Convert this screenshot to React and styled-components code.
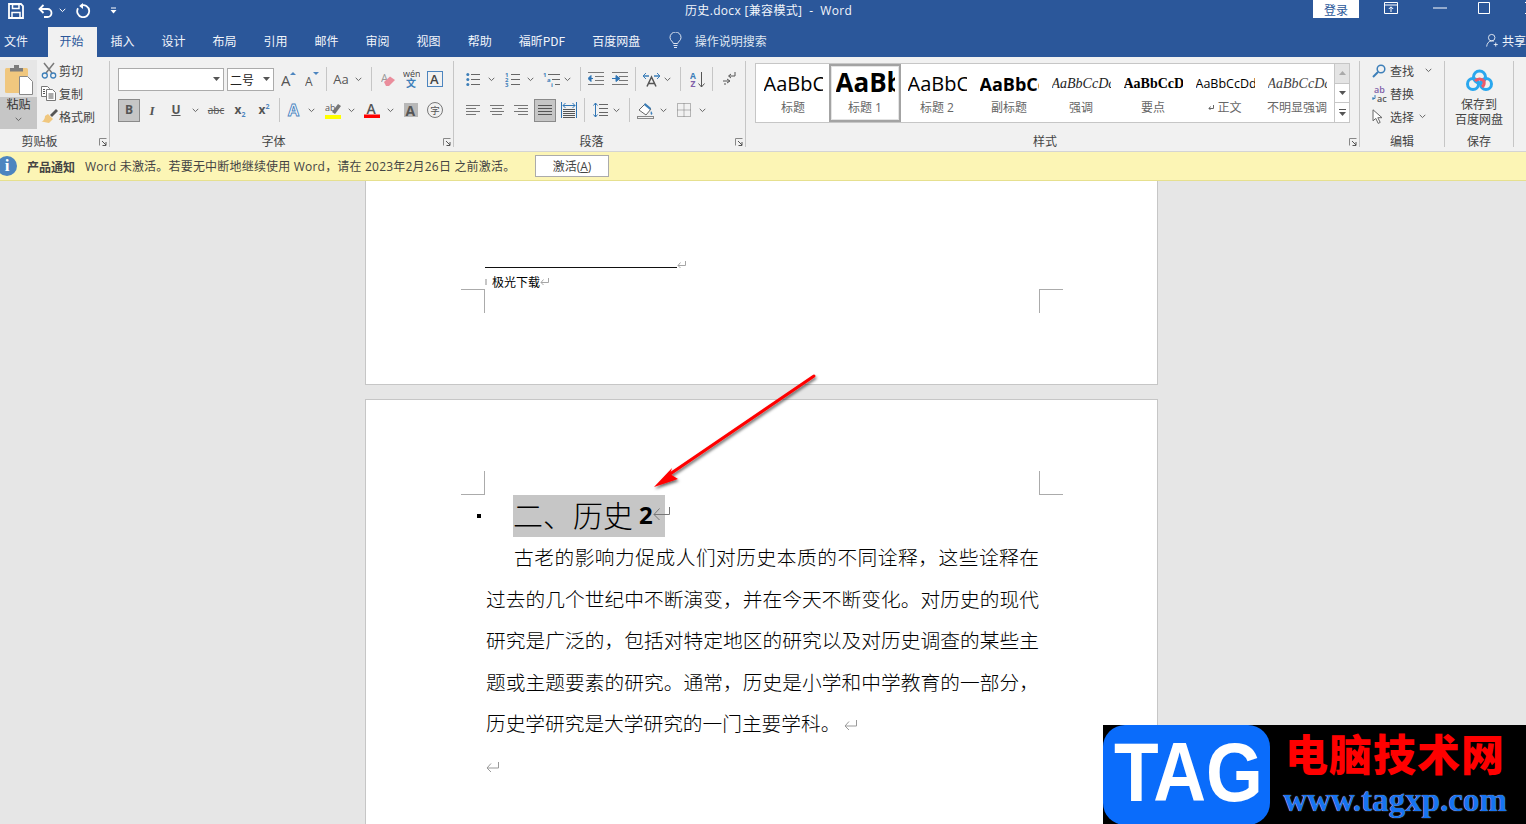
import styled, { createGlobalStyle } from "styled-components";

const Global = createGlobalStyle`
  html, body { margin: 0; padding: 0; height: 100%; overflow: hidden; }
  body { font-family: "Noto Sans CJK SC", "Open Sans", sans-serif; font-size: 12px; }
  #root { height: 100%; }
`;

const UI = `"Open Sans", "Noto Sans CJK SC", sans-serif`;

const Screen = styled.div`
  position: relative;
  width: 1526px;
  height: 824px;
  display: flex;
  flex-direction: column;
  overflow: hidden;
  background: #e6e6e6;
`;

const TitleBar = styled.div`
  height: 27px;
  flex: none;
  background: #2b579a;
  color: #fff;
  display: flex;
  align-items: flex-start;
`;

const Qat = styled.div`
  width: 685px;
  height: 21px;
  flex: none;
  display: flex;
  align-items: center;
  padding-left: 8px;
  box-sizing: border-box;
`;

const QatSlot = styled.span`
  display: flex;
  align-items: center;
  margin-left: ${p => p.$ml || 0}px;
`;

const DocTitle = styled.div`
  width: 628px;
  flex: none;
  font-family: ${UI};
  font-size: 12px;
  line-height: 21px;
  white-space: pre;
  letter-spacing: .33px;
  color: #f2f5fa;
`;

const Login = styled.div`
  width: 46px;
  height: 18px;
  flex: none;
  background: #fff;
  color: #2b579a;
  text-align: center;
  line-height: 20px;
  font-size: 12px;
`;

const WinBtn = styled.span`
  height: 16px;
  flex: none;
  display: flex;
  align-items: center;
  margin-left: ${p => p.$ml}px;
`;

const TabBar = styled.div`
  height: 30px;
  flex: none;
  background: #2b579a;
  display: flex;
  align-items: stretch;
  color: #f2f5fa;
  font-size: 12px;
`;

const FileTab = styled.div`
  width: 48px;
  padding-left: 4px;
  box-sizing: border-box;
  line-height: 28px;
`;

const Tab = styled.div`
  padding: 0 13.5px 0 11.5px;
  line-height: 28px;
  margin-right: 2px;
  ${p => p.$active && `
    background: #f1f1f1;
    color: #2b579a;
  `}
`;

const SearchHint = styled.div`
  display: flex;
  align-items: center;
  gap: 13px;
  margin-left: 13px;
  padding-bottom: 3px;
  color: #dfe6f1;
`;

const Share = styled.div`
  margin-left: auto;
  width: 40px;
  flex: none;
  display: flex;
  align-items: center;
  gap: 3px;
  white-space: nowrap;
  overflow: hidden;
  padding-bottom: 3px;
`;

const Ribbon = styled.div`
  height: 95px;
  flex: none;
  background: #f1f1f1;
  display: flex;
  align-items: flex-start;
  border-bottom: 1px solid #d4d4d4;
  box-sizing: border-box;
  color: #444;
`;

const Group = styled.div`
  position: relative;
  width: ${p => p.$w}px;
  flex: none;
  box-sizing: border-box;
  height: 86px;
  margin-top: 4px;
  border-right: 1px solid #c6c6c6;
  display: flex;
  flex-direction: column;
`;

const GroupBody = styled.div`
  height: 73px;
  flex: none;
  box-sizing: border-box;
  padding: ${p => p.$pad || "6px 0 0 8px"};
  display: flex;
  flex-direction: ${p => p.$row ? "row" : "column"};
  gap: ${p => p.$gap ?? 7}px;
`;

const GroupLabel = styled.div`
  height: 14px;
  line-height: 13px;
  flex: none;
  text-align: center;
  padding-right: ${p => p.$pr || 0}px;
`;

const Launcher = styled.span`
  position: absolute;
  right: 2px;
  bottom: 1px;
  display: flex;
`;

const PasteBtn = styled.div`
  width: 37px;
  height: 69px;
  flex: none;
  margin-top: -1px;
  display: flex;
  flex-direction: column;
`;

const PasteTop = styled.div`
  height: 37px;
  flex: none;
  background: #e6e6e6;
  display: flex;
  justify-content: center;
  padding-top: 5px;
  box-sizing: border-box;
`;

const PasteBottom = styled.div`
  flex: 1;
  background: #c6c6c6;
  display: flex;
  flex-direction: column;
  align-items: center;
  font-size: 12px;
  line-height: 14px;
  color: #333;
  gap: 6px;
`;

const SmallStack = styled.div`
  display: flex;
  flex-direction: column;
  margin: -2px 0 0 ${p => p.$ml || 0}px;
`;

const SmallRow = styled.div`
  height: 23px;
  display: flex;
  align-items: center;
`;

const SmallIcon = styled.span`
  width: ${p => p.$w || 18}px;
  flex: none;
  display: flex;
  justify-content: flex-start;
  margin-right: ${p => p.$mr || 0}px;
`;

const ToolRow = styled.div`
  height: 24px;
  display: flex;
  align-items: center;
`;

const Cell = styled.span`
  width: ${p => p.$w || 20}px;
  height: 23px;
  flex: none;
  margin-left: ${p => p.$ml || 0}px;
  display: flex;
  align-items: center;
  justify-content: center;
  box-sizing: border-box;
  ${p => p.$on && `
    background: #c6c6c6;
    border: 1px solid #8a8a8a;
  `}
`;

const Sep = styled.span`
  width: 1px;
  height: 24px;
  flex: none;
  background: #c6c6c6;
  margin-left: ${p => p.$ml}px;
`;

const Combo = styled.div`
  width: ${p => p.$w}px;
  height: 23px;
  flex: none;
  margin-left: ${p => p.$ml || 0}px;
  box-sizing: border-box;
  background: #fff;
  border: 1px solid #ababab;
  display: flex;
  align-items: center;
  justify-content: space-between;
  padding: 0 3px 0 2px;
  color: #222;
`;

const Gallery = styled.div`
  display: flex;
  width: 595px;
  height: 60px;
  margin: 2px 0 0 9px;
  box-sizing: border-box;
  background: #fff;
  border: 1px solid #c6c6c6;
  padding-left: 1px;
`;

const StyleItem = styled.div`
  width: 72px;
  height: 58px;
  flex: none;
  box-sizing: border-box;
  display: flex;
  flex-direction: column;
  align-items: center;
  ${p => p.$selected && `
    border: 2px solid #a3a3a3;
    box-shadow: inset 0 0 0 1px #e4e4e4;
  `}
`;

const Sample = styled.div`
  width: 59px;
  height: 34px;
  margin-top: ${p => p.$selected ? 0 : 2}px;
  flex: none;
  overflow: hidden;
  white-space: nowrap;
  line-height: ${p => p.$selected ? 33 : 36}px;
  color: ${p => p.$color || "#000"};
  font-family: ${p => p.$serif ? `"Liberation Serif", serif` : UI};
  font-size: ${p => p.$size}px;
  font-weight: ${p => p.$bold ? 700 : 400};
  font-style: ${p => p.$italic ? "italic" : "normal"};
`;

const Caption = styled.div`
  color: #666;
  font-size: 12px;
  line-height: 16px;
  white-space: nowrap;
  font-family: ${UI};
  display: flex;
  align-items: center;
  gap: 3px;
`;

const GalleryScroll = styled.div`
  margin-left: auto;
  width: 14px;
  flex: none;
  display: flex;
  flex-direction: column;
  border-left: 1px solid #c6c6c6;
`;

const ScrollBtn = styled.div`
  flex: 1;
  display: flex;
  align-items: center;
  justify-content: center;
  background: ${p => p.$off ? "#e4e4e4" : "#fff"};
  border-top: ${p => p.$first ? "none" : "1px solid #c6c6c6"};
`;

const SaveBody = styled.div`
  height: 73px;
  flex: none;
  display: flex;
  flex-direction: column;
  align-items: center;
  padding-top: 3px;
  box-sizing: border-box;
  line-height: 15px;
`;

const SaveIcon = styled.div`
  height: 32px;
  flex: none;
  display: flex;
  align-items: center;
`;

const Notice = styled.div`
  height: 29px;
  flex: none;
  box-sizing: border-box;
  background: #fcf5b5;
  border-bottom: 1px solid #e6e08f;
  display: flex;
  align-items: center;
  color: #444;
  font-family: ${UI};
  overflow: hidden;
`;

const NoticeIcon = styled.div`
  width: 20px;
  height: 20px;
  flex: none;
  margin-left: -3px;
  border-radius: 50%;
  background: #4d85bf;
  color: #fff;
  font: 700 17px/20px "Liberation Serif", serif;
  text-align: center;
`;

const NoticeName = styled.b`
  margin-left: 10px;
  font-weight: 700;
  font-family: "Noto Sans CJK SC", sans-serif;
  color: #444;
`;

const NoticeText = styled.span`
  margin-left: 10px;
  width: 450px;
  flex: none;
  white-space: nowrap;
  letter-spacing: .2px;
`;

const ActivateBtn = styled.div`
  width: 74px;
  height: 22px;
  flex: none;
  box-sizing: border-box;
  background: #fff;
  border: 1px solid #ababab;
  text-align: center;
  line-height: 21px;
  color: #444;
`;

const Workspace = styled.div`
  flex: 1;
  min-height: 0;
  padding-left: 365px;
  display: flex;
  flex-direction: column;
  gap: 14px;
  overflow: hidden;
`;

const Page = styled.div`
  width: 793px;
  box-sizing: border-box;
  flex: none;
  background: #fff;
  border: 1px solid #c6c6c6;
  padding: ${p => p.$pad};
  height: ${p => p.$h}px;
  ${p => p.$cutTop && "border-top: none;"}
`;

const FootRule = styled.div`
  width: 192px;
  margin-left: 24px;
  height: 1px;
  background: #111;
  position: relative;
`;

const ReturnMark = styled.span`
  display: inline-flex;
  flex: none;
  margin-left: ${p => p.$ml || 0}px;
`;

const FootRuleEnd = styled.span`
  position: absolute;
  left: 100%;
  top: -6px;
  display: flex;
`;

const FootNote = styled.div`
  margin: 6px 0 0 24px;
  height: 15px;
  display: flex;
  align-items: center;
  font-size: 12px;
  line-height: 15px;
  color: #000;
`;

const NoteTick = styled.span`
  width: 2px;
  height: 6px;
  background: #c6c6c6;
  margin-right: 5px;
`;

const CropRow = styled.div`
  display: flex;
  justify-content: space-between;
  width: 602px;
`;

const CropMark = styled.div`
  width: 24px;
  height: 24px;
  box-sizing: border-box;
  border-color: #ababab;
  border-style: solid;
  border-width: 0;
  ${p => p.$left ? "border-right-width: 1px;" : "border-left-width: 1px;"}
  ${p => p.$top ? "border-top-width: 1px;" : "border-bottom-width: 1px;"}
`;

const HeadingRow = styled.div`
  display: flex;
  align-items: center;
  height: 42px;
`;

const Bullet = styled.span`
  width: 4px;
  height: 4px;
  background: #000;
  margin: 0 0 1px 16px;
  flex: none;
`;

const HeadingText = styled.div`
  margin-left: 32px;
  height: 42px;
  width: 152px;
  background: #c6c6c6;
  padding-bottom: 4px;
  box-sizing: border-box;
  display: flex;
  align-items: center;
  font-size: 30px;
  font-weight: 300;
  color: #000;
  white-space: pre;
`;

const HeadingNum = styled.b`
  font-family: "Open Sans", sans-serif;
  font-size: 24px;
  font-weight: 700;
  margin: 0 0 0 6px;
`;

const Body = styled.div`
  margin: -1px 0 0 25px;
  width: 553px;
  font-size: 19.7px;
  font-weight: 300;
  color: #000;
`;

const Line = styled.div`
  height: 41.5px;
  line-height: 41.5px;
  white-space: nowrap;
  text-align: justify;
  text-align-last: ${p => p.$last ? "left" : "justify"};
  padding-left: ${p => p.$indent || 0}px;
`;

const ArrowLayer = styled.svg`
  position: absolute;
  left: 640px;
  top: 366px;
`;

const Watermark = styled.div`
  position: absolute;
  right: 0;
  bottom: 0;
  width: 423px;
  height: 99px;
  background: #000;
  display: flex;
  overflow: hidden;
`;

const TagBadge = styled.div`
  width: 167px;
  height: 100px;
  flex: none;
  background: #0a6cfb;
  border-radius: 22px;
  color: #fff;
  font: 700 84px/94px "Liberation Sans", sans-serif;
  text-align: center;
`;

const TagWord = styled.span`
  display: inline-block;
  transform: scaleX(.87);
  transform-origin: 50% 50%;
`;

const WatermarkText = styled.div`
  display: flex;
  flex-direction: column;
  align-items: center;
  width: 236px;
  margin-left: 7px;
`;

const SiteName = styled.div`
  color: #f00;
  font-size: 43px;
  font-weight: 900;
  line-height: 55px;
  letter-spacing: 1px;
  white-space: nowrap;
`;

const SiteUrl = styled.div`
  color: #1673f0;
  font: 700 33px/40px "Liberation Serif", serif;
  white-space: nowrap;
  text-shadow: 0 0 1px #fff;
`;

const Icon = ({ w = 16, h = 16, children }) => (
  <svg width={w} height={h} viewBox={`0 0 ${w} ${h}`} fill="none">{children}</svg>
);

const Caret = ({ c = "#666" }) => (
  <Icon w={7} h={5}><path d="M.7.8 3.500 3.600 6.300.8" stroke={c} /></Icon>
);

const DropTri = ({ c = "#555" }) => (
  <Icon w={7} h={4}><path d="M0 0h7L3.500 4z" fill={c} /></Icon>
);

const SaveQat = () => (
  <Icon w={16} h={16}>
    <path d="M1 1h12l2 2v12H1z" stroke="#fff" strokeWidth="1.800" />
    <path d="M4.500 1.500h6.500v4H4.500zM4 9.500h8V15H4z" stroke="#fff" strokeWidth="1.500" />
  </Icon>
);

const UndoQat = () => (
  <Icon w={15} h={14}>
    <path d="M1.500 5h8a4 4 0 0 1 0 8H6" stroke="#fff" strokeWidth="1.800" />
    <path d="M5.500 1 1.500 5l4 4" stroke="#fff" strokeWidth="1.800" />
  </Icon>
);

const RedoQat = () => (
  <Icon w={15} h={15}>
    <path d="M5 2.600a6 6 0 1 1-3 2.600" stroke="#fff" strokeWidth="1.800" />
    <path d="M7 0v6L3.200 3z" fill="#fff" />
  </Icon>
);

const QatMore = () => (
  <Icon w={7} h={7}>
    <path d="M1 1h5" stroke="#fff" />
    <path d="M.5 3h6L3.500 6.500z" fill="#fff" />
  </Icon>
);

const RibbonDisplay = () => (
  <Icon w={14} h={12}>
    <path d="M.5.5h13v11H.5zM.5 3h13" stroke="#fff" />
    <path d="M7 10V5M4.800 7 7 4.800 9.200 7" stroke="#fff" />
  </Icon>
);

const Bulb = () => (
  <Icon w={13} h={17}>
    <path d="M4.300 11.500C4 9.500 1 8.500 1 5.500a5.500 5.500 0 0 1 11 0c0 3-3 4-3.300 6z" stroke="#dfe6f1" />
    <path d="M4.500 13.500h4M5 15.500h3" stroke="#dfe6f1" />
  </Icon>
);

const Person = () => (
  <Icon w={16} h={17}>
    <circle cx="7" cy="5" r="4" stroke="#fff" />
    <path d="M.8 16c.4-3.800 2.500-7 6.200-7 1 0 1.800.2 2.500.5" stroke="#fff" />
    <path d="M12 11v5M9.500 13.500h5" stroke="#fff" />
  </Icon>
);

const PasteIcon = () => (
  <Icon w={28} h={30}>
    <rect x="0" y="3" width="23" height="25" rx="1.500" fill="#f0c77e" />
    <path d="M5 3h4V0h5v3h4v3.500H5z" fill="#7d7d7d" />
    <path d="M14.500 11.500h8l5 5v13h-13z" fill="#fff" stroke="#888" />
  </Icon>
);

const Scissors = () => (
  <Icon w={16} h={17}>
    <path d="M3 1l8 10M13 1 5 11" stroke="#7a7a7a" strokeWidth="1.500" />
    <circle cx="3.800" cy="13.500" r="2.500" stroke="#3d7fb9" strokeWidth="1.300" />
    <circle cx="12.200" cy="13.500" r="2.500" stroke="#3d7fb9" strokeWidth="1.300" />
  </Icon>
);

const CopyIcon = () => (
  <Icon w={16} h={15}>
    <path d="M.5.500h6l2 2v8h-8z" fill="#fff" stroke="#777" />
    <path d="M5.500 3.500h6l3 3v8h-9z" fill="#fff" stroke="#777" />
    <path d="M7.500 8h5M7.500 10h5M7.500 12h5M2 3.500h2M2 5.500h2M2 7.500h2" stroke="#555" />
  </Icon>
);

const BrushIcon = () => (
  <Icon w={17} h={15}>
    <path d="M7 5 12 10 8 14 .5 12.500C3 12 4 9 4 7z" fill="#f0c77e" />
    <path d="M9 6l6-6 2 2-6 6z" fill="#555" />
  </Icon>
);

const GrowFont = ({ up }) => (
  <Icon w={15} h={15}>
    <text x="0" y="14" fontFamily="Open Sans" fontSize={up ? 15 : 12} fill="#555">A</text>
    <path d={up ? "M9 3h6l-3-3z" : "M8 0h6l-3 3z"} fill="#4d85bf" />
  </Icon>
);

const Eraser = () => (
  <Icon w={15} h={15}>
    <text x="0" y="10" fontFamily="Open Sans" fontSize="11" fill="#999">A</text>
    <path d="M3 10 9 4.500l5 3.500-6 6H5z" fill="#ea8d9c" />
  </Icon>
);

const Wen = () => (
  <Icon w={17} h={18}>
    <text x="0" y="7" fontFamily="Open Sans" fontSize="9" fill="#444">wén</text>
    <text x="3" y="17" fontFamily="Noto Sans CJK SC" fontSize="10" fontWeight="700" fill="#3d7fb9">文</text>
  </Icon>
);

const BoxA = () => (
  <Icon w={16} h={16}>
    <rect x=".5" y=".5" width="15" height="15" stroke="#4d85bf" />
    <text x="3" y="13" fontFamily="Open Sans" fontWeight="600" fontSize="13" fill="#444">A</text>
  </Icon>
);

const Glyph = styled.span`
  font-family: ${p => p.$serif ? `"Liberation Serif", serif` : UI};
  font-weight: ${p => p.$bold ? 700 : 400};
  font-style: ${p => p.$italic ? "italic" : "normal"};
  font-size: ${p => p.$size || 12}px;
  color: ${p => p.$color || "#555"};
  text-decoration: ${p => p.$deco || "none"};
  line-height: 1;
  white-space: nowrap;
`;

const Sub = styled.sub`
  font-size: 7px;
  color: #4d85bf;
  vertical-align: sub;
  line-height: 0;
`;

const Sup = styled.sup`
  font-size: 7px;
  color: #4d85bf;
  vertical-align: super;
  line-height: 0;
`;

const EffectA = () => (
  <Icon w={16} h={16}>
    <text x="1" y="14" fontFamily="Open Sans" fontWeight="700" fontSize="16" fill="#fff" stroke="#4d85bf" strokeWidth=".9">A</text>
  </Icon>
);

const Highlight = () => (
  <Icon w={16} h={17}>
    <text x="0" y="9" fontFamily="Open Sans" fontSize="9" fill="#555">ab</text>
    <path d="M7 10 13 2l3 2-6 8z" fill="#777" />
    <rect y="13" width="16" height="4" fill="#ff0" />
  </Icon>
);

const RedA = () => (
  <Icon w={16} h={16}>
    <text x="2.500" y="11.500" fontFamily="Open Sans" fontWeight="600" fontSize="14" fill="#555">A</text>
    <rect y="12.500" width="16" height="3.500" fill="#f00" />
  </Icon>
);

const ShadedA = () => (
  <Icon w={14} h={14}>
    <rect width="14" height="14" fill="#b8b8b8" />
    <text x="1.500" y="12.500" fontFamily="Open Sans" fontWeight="700" fontSize="14" fill="#555">A</text>
  </Icon>
);

const CircleChar = () => (
  <Icon w={16} h={16}>
    <circle cx="8" cy="8" r="7.500" stroke="#777" />
    <text x="3.200" y="12" fontFamily="Noto Sans CJK SC" fontSize="9.500" fill="#555">字</text>
  </Icon>
);

const Lines = ({ w = 14, rows, c = "#777" }) => (
  <Icon w={w} h={14}>
    {rows.map(([x1, x2, y]) => <path key={y} d={`M${x1} ${y}.5H${x2}`} stroke={c} />)}
  </Icon>
);

const ListBullets = () => (
  <Icon w={14} h={15}>
    {[2, 7, 12].map(y => <circle key={y} cx="1.800" cy={y + .5} r="1.500" fill="#3d7fb9" />)}
    {[2, 7, 12].map(y => <path key={y} d={`M5 ${y}.5h9`} stroke="#666" />)}
  </Icon>
);

const ListNumbers = () => (
  <Icon w={15} h={15}>
    {[["1", 5], ["2", 10], ["3", 15]].map(([n, y]) => (
      <text key={n} x="0" y={y} fontSize="6" fontWeight="700" fontFamily="Open Sans" fill="#3d7fb9">{n}</text>
    ))}
    {[2, 7, 12].map(y => <path key={y} d={`M6 ${y}.5h9`} stroke="#666" />)}
  </Icon>
);

const ListMulti = () => (
  <Icon w={17} h={15}>
    <text x="0" y="5" fontSize="6" fontWeight="700" fontFamily="Open Sans" fill="#3d7fb9">1</text>
    <text x="4" y="10" fontSize="6" fontWeight="700" fontFamily="Open Sans" fill="#3d7fb9">a</text>
    <text x="8" y="15" fontSize="6" fontWeight="700" fontFamily="Open Sans" fill="#3d7fb9">i</text>
    <path d="M5 2.500h12M9 7.500h8M12 12.500h5" stroke="#666" />
  </Icon>
);

const Indent = ({ dir }) => (
  <Icon w={16} h={14}>
    <path d="M0 .5h16M7 4.500h9M7 8.500h9M0 12.500h16" stroke="#777" />
    <path d={dir === "in" ? "M0 6.500h4M4 3.500v6L8 6.500z" : "M5 6.500h-2M3 3.500v6L0 6.500z"} fill="#2f75b5" stroke="#2f75b5" />
  </Icon>
);

const TextDir = () => (
  <Icon w={17} h={15}>
    <path d="M1 4h5M11 4h5" stroke="#3d7fb9" strokeWidth="1.500" />
    <path d="M3 1 0 4l3 3M14 1l3 3-3 3" stroke="#3d7fb9" />
    <path d="M4 14.500 8.500 5l4.500 9.500M5.500 11.500h6" stroke="#555" strokeWidth="1.500" />
  </Icon>
);

const SortAz = () => (
  <Icon w={15} h={17}>
    <text x="0" y="7.500" fontSize="8.500" fontWeight="700" fontFamily="Open Sans" fill="#3d7fb9">A</text>
    <text x="0.500" y="16" fontSize="8.500" fontWeight="700" fontFamily="Open Sans" fill="#8060a8">Z</text>
    <path d="M11.500 1v15M8.500 12.500l3 3.500 3-3.500" stroke="#555" />
  </Icon>
);

const ShowMarks = () => (
  <Icon w={13} h={14}>
    <path d="M12 0v4H6M8 2 5.500 4 8 6" stroke="#555" />
    <path d="M0 9h6M4 7l3 2-3 2M2 11v2" stroke="#555" />
  </Icon>
);

const Distributed = () => (
  <Icon w={16} h={16}>
    <path d="M2 7.500h12M2 9.500h12M2 11.500h12M2 13.500h12M2 15.500h12" stroke="#555" />
    <path d="M.5 0v16M15.500 0v16M2 3.500h12" stroke="#2f75b5" />
    <path d="M4.500 1 2 3.500 4.500 6M11.500 1 14 3.500 11.500 6" stroke="#2f75b5" />
  </Icon>
);

const LineSpacing = () => (
  <Icon w={15} h={16}>
    <path d="M2.500 1v14M.5 3.500l2-2.500 2 2.500M.5 12.500l2 2.500 2-2.500" stroke="#2f75b5" />
    <path d="M6 2.500h9M6 6.500h9M6 10.500h9M6 13.500h9" stroke="#666" />
  </Icon>
);

const Shading = () => (
  <Icon w={17} h={17}>
    <path d="M2 8 8 2l6 5-5 6z" fill="#fff" stroke="#666" />
    <path d="M8 1l6 5-1 2-6-5z" fill="#3d7fb9" />
    <path d="M14 9c1 1.500 2 2.500 1 3.500s-2-1-1-3.500z" fill="#3d7fb9" />
    <rect x=".5" y="14.500" width="16" height="2" stroke="#888" fill="#f1f1f1" />
  </Icon>
);

const Borders = () => (
  <Icon w={14} h={14}>
    <path d="M.5.500h13v13H.5zM7 .5v13M.5 7h13" stroke="#777" strokeDasharray="1 1" />
  </Icon>
);

const LauncherIcon = () => (
  <Icon w={8} h={8}>
    <path d="M.5 7.500v-7h7" stroke="#888" />
    <path d="M3 3l4 4M7 4v3.500H3.500" stroke="#555" />
  </Icon>
);

const FindIcon = () => (
  <Icon w={14} h={14}>
    <circle cx="9" cy="5" r="3.800" stroke="#3d7fb9" strokeWidth="1.500" />
    <path d="M6 8l-5 5" stroke="#3d7fb9" strokeWidth="2" />
  </Icon>
);

const ReplaceIcon = () => (
  <Icon w={16} h={16}>
    <text x="2" y="7" fontSize="9" fontFamily="Open Sans" fontWeight="600" fill="#8060a8">ab</text>
    <text x="5" y="15.500" fontSize="9" fontFamily="Open Sans" fontWeight="600" fill="#555">ac</text>
    <path d="M3 9v3.500H.5M1.500 11 0 12.500 1.500 14" stroke="#3d7fb9" />
  </Icon>
);

const SelectIcon = () => (
  <Icon w={11} h={15}>
    <path d="M1 .8v11l2.800-2.400 2.400 5 2-1-2.400-4.700H10z" fill="#fff" stroke="#666" />
  </Icon>
);

const BaiduCloud = () => (
  <Icon w={27} h={23}>
    <circle cx="7" cy="15" r="5.500" stroke="#2aa7ee" strokeWidth="3" />
    <circle cx="20" cy="15" r="5.500" stroke="#2aa7ee" strokeWidth="3" />
    <circle cx="13.500" cy="8" r="6" stroke="#2aa7ee" strokeWidth="3" />
    <path d="M9 12a6 6 0 0 1 9 0 6 6 0 0 1-2 6" stroke="#ee5a6a" strokeWidth="3" />
  </Icon>
);

const ReturnArrow = ({ w = 9, h = 8, c = "#a6a6a6" }) => (
  <Icon w={w} h={h}>
    <path d={`M${w - .5} 0v${h / 2 + .5}H1M${h / 2 - .5} 1.500 1 ${h / 2 + .5}l${h / 2 - 1.500} ${h / 2 - 1.500}`} stroke={c} />
  </Icon>
);

const styleItems = [
  { name: "标题", text: "AaBbC", size: 20 },
  { name: "标题 1", text: "AaBbC", size: 26, bold: true, selected: true },
  { name: "标题 2", text: "AaBbC", size: 20 },
  { name: "副标题", text: "AaBbCcDd", size: 18, bold: true },
  { name: "强调", text: "AaBbCcDd", size: 14, italic: true, serif: true, color: "#222" },
  { name: "要点", text: "AaBbCcDd", size: 14, bold: true, serif: true },
  { name: "正文", text: "AaBbCcDd", size: 12.5, mark: true },
  { name: "不明显强调", text: "AaBbCcDd", size: 14, italic: true, serif: true, color: "#444" },
];

const tabs = ["开始", "插入", "设计", "布局", "引用", "邮件", "审阅", "视图", "帮助", "福昕PDF", "百度网盘"];

const bodyLines = [
  "古老的影响力促成人们对历史本质的不同诠释，这些诠释在",
  "过去的几个世纪中不断演变，并在今天不断变化。对历史的现代",
  "研究是广泛的，包括对特定地区的研究以及对历史调查的某些主",
  "题或主题要素的研究。通常，历史是小学和中学教育的一部分，",
];

export default function App() {
  return (
    <Screen>
      <Global />
      <TitleBar>
        <Qat>
          <QatSlot><SaveQat /></QatSlot>
          <QatSlot $ml={14}><UndoQat /></QatSlot>
          <QatSlot $ml={6}><Caret c="#fff" /></QatSlot>
          <QatSlot $ml={10}><RedoQat /></QatSlot>
          <QatSlot $ml={19}><QatMore /></QatSlot>
        </Qat>
        <DocTitle>{"历史.docx [兼容模式]  -  Word"}</DocTitle>
        <Login>登录</Login>
        <WinBtn $ml={25}><RibbonDisplay /></WinBtn>
        <WinBtn $ml={35}><Icon w={14} h={2}><path d="M0 1h14" stroke="#fff" /></Icon></WinBtn>
        <WinBtn $ml={31}><Icon w={12} h={12}><path d="M.5.5h11v11H.5z" stroke="#fff" /></Icon></WinBtn>
        <WinBtn $ml={35}><Icon w={12} h={12}><path d="M0 0l12 12M12 0 0 12" stroke="#fff" /></Icon></WinBtn>
      </TitleBar>

      <TabBar>
        <FileTab>文件</FileTab>
        {tabs.map((t, i) => <Tab key={t} $active={i === 0}>{t}</Tab>)}
        <SearchHint><Bulb />操作说明搜索</SearchHint>
        <Share><Person />共享</Share>
      </TabBar>

      <Ribbon>
        <Group $w={110}>
          <GroupBody $row $pad="0" $gap={0}>
            <PasteBtn>
              <PasteTop><PasteIcon /></PasteTop>
              <PasteBottom>粘贴<Caret /></PasteBottom>
            </PasteBtn>
            <SmallStack $ml={4}>
              <SmallRow><SmallIcon><Scissors /></SmallIcon>剪切</SmallRow>
              <SmallRow><SmallIcon><CopyIcon /></SmallIcon>复制</SmallRow>
              <SmallRow><SmallIcon><BrushIcon /></SmallIcon>格式刷</SmallRow>
            </SmallStack>
          </GroupBody>
          <GroupLabel $pr={30}>剪贴板</GroupLabel>
          <Launcher><LauncherIcon /></Launcher>
        </Group>

        <Group $w={344}>
          <GroupBody>
            <ToolRow>
              <Combo $w={106}><span /><DropTri /></Combo>
              <Combo $w={47} $ml={3}>二号<DropTri /></Combo>
              <Cell $ml={4}><GrowFont up /></Cell>
              <Cell $ml={4}><GrowFont /></Cell>
              <Sep $ml={4} />
              <Cell $ml={4}><Glyph $size={13}>Aa</Glyph></Cell>
              <Cell $w={10} $ml={2}><Caret /></Cell>
              <Sep $ml={8} />
              <Cell $ml={6}><Eraser /></Cell>
              <Cell $ml={3}><Wen /></Cell>
              <Cell $ml={4}><BoxA /></Cell>
            </ToolRow>
            <ToolRow>
              <Cell $w={22} $on><Glyph $bold>B</Glyph></Cell>
              <Cell $ml={2}><Glyph $serif $italic $bold $size={13}>I</Glyph></Cell>
              <Cell $ml={4}><Glyph $bold $deco="underline">U</Glyph></Cell>
              <Cell $w={10} $ml={4}><Caret /></Cell>
              <Cell $w={22} $ml={5}><Glyph $size={10} $deco="line-through">abc</Glyph></Cell>
              <Cell $ml={3}><Glyph $bold>x<Sub>2</Sub></Glyph></Cell>
              <Cell $ml={4}><Glyph $bold>x<Sup>2</Sup></Glyph></Cell>
              <Sep $ml={5} />
              <Cell $ml={5}><EffectA /></Cell>
              <Cell $w={10} $ml={1}><Caret /></Cell>
              <Cell $ml={7}><Highlight /></Cell>
              <Cell $w={10} $ml={3}><Caret /></Cell>
              <Cell $ml={6}><RedA /></Cell>
              <Cell $w={10} $ml={3}><Caret /></Cell>
              <Cell $ml={6}><ShadedA /></Cell>
              <Cell $ml={4}><CircleChar /></Cell>
            </ToolRow>
          </GroupBody>
          <GroupLabel $pr={16}>字体</GroupLabel>
          <Launcher><LauncherIcon /></Launcher>
        </Group>

        <Group $w={292}>
          <GroupBody>
            <ToolRow>
              <Cell $ml={1}><ListBullets /></Cell>
              <Cell $w={10} $ml={3}><Caret /></Cell>
              <Cell $ml={6}><ListNumbers /></Cell>
              <Cell $w={10} $ml={3}><Caret /></Cell>
              <Cell $ml={6}><ListMulti /></Cell>
              <Cell $w={10} $ml={1}><Caret /></Cell>
              <Sep $ml={8} />
              <Cell $ml={5}><Indent /></Cell>
              <Cell $ml={4}><Indent dir="in" /></Cell>
              <Sep $ml={5} />
              <Cell $ml={5}><TextDir /></Cell>
              <Cell $w={10} $ml={1}><Caret /></Cell>
              <Sep $ml={8} />
              <Cell $ml={6}><SortAz /></Cell>
              <Sep $ml={5} />
              <Cell $ml={6}><ShowMarks /></Cell>
            </ToolRow>
            <ToolRow>
              <Cell $ml={1}><Lines rows={[[0, 14, 2], [0, 10, 5], [0, 14, 8], [0, 10, 11]]} /></Cell>
              <Cell $ml={4}><Lines rows={[[0, 14, 2], [2, 12, 5], [0, 14, 8], [2, 12, 11]]} /></Cell>
              <Cell $ml={4}><Lines rows={[[0, 14, 2], [4, 14, 5], [0, 14, 8], [4, 14, 11]]} /></Cell>
              <Cell $w={22} $ml={3} $on><Lines rows={[[0, 14, 2], [0, 14, 5], [0, 14, 8], [0, 14, 11]]} c="#555" /></Cell>
              <Cell $ml={3}><Distributed /></Cell>
              <Sep $ml={5} />
              <Cell $ml={5}><LineSpacing /></Cell>
              <Cell $w={10} $ml={1}><Caret /></Cell>
              <Sep $ml={8} />
              <Cell $ml={5}><Shading /></Cell>
              <Cell $w={10} $ml={3}><Caret /></Cell>
              <Cell $ml={6}><Borders /></Cell>
              <Cell $w={10} $ml={3}><Caret /></Cell>
            </ToolRow>
          </GroupBody>
          <GroupLabel $pr={16}>段落</GroupLabel>
          <Launcher><LauncherIcon /></Launcher>
        </Group>

        <Group $w={614}>
          <GroupBody $pad="0" $gap={0}>
            <Gallery>
              {styleItems.map(s => (
                <StyleItem key={s.name} $selected={s.selected}>
                  <Sample $size={s.size} $bold={s.bold} $italic={s.italic} $serif={s.serif} $color={s.color} $selected={s.selected}>
                    {s.text}
                  </Sample>
                  <Caption>{s.mark && <ReturnArrow w={6} h={6} c="#666" />}{s.name}</Caption>
                </StyleItem>
              ))}
              <GalleryScroll>
                <ScrollBtn $first $off><Icon w={7} h={4}><path d="M0 4h7L3.500 0z" fill="#aaa" /></Icon></ScrollBtn>
                <ScrollBtn><DropTri /></ScrollBtn>
                <ScrollBtn>
                  <Icon w={7} h={7}><path d="M0 .5h7" stroke="#555" /><path d="M0 3h7L3.500 7z" fill="#555" /></Icon>
                </ScrollBtn>
              </GalleryScroll>
            </Gallery>
          </GroupBody>
          <GroupLabel $pr={15}>样式</GroupLabel>
          <Launcher><LauncherIcon /></Launcher>
        </Group>

        <Group $w={85}>
          <GroupBody $pad="0 0 0 12px" $gap={0}>
            <SmallStack>
              <SmallRow><SmallIcon><FindIcon /></SmallIcon>查找<Cell $w={10} $ml={9}><Caret /></Cell></SmallRow>
              <SmallRow><SmallIcon><ReplaceIcon /></SmallIcon>替换</SmallRow>
              <SmallRow><SmallIcon><SelectIcon /></SmallIcon>选择<Cell $w={10} $ml={3}><Caret /></Cell></SmallRow>
            </SmallStack>
          </GroupBody>
          <GroupLabel>编辑</GroupLabel>
        </Group>

        <Group $w={69}>
          <SaveBody>
            <SaveIcon><BaiduCloud /></SaveIcon>
            <span>保存到</span>
            <span>百度网盘</span>
          </SaveBody>
          <GroupLabel>保存</GroupLabel>
        </Group>
      </Ribbon>

      <Notice>
        <NoticeIcon>i</NoticeIcon>
        <NoticeName>产品通知</NoticeName>
        <NoticeText>Word 未激活。若要无中断地继续使用 Word，请在 2023年2月26日 之前激活。</NoticeText>
        <ActivateBtn>激活(<u>A</u>)</ActivateBtn>
      </Notice>

      <Workspace>
        <Page $cutTop $h={204} $pad="86px 0 0 95px">
          <FootRule>
            <FootRuleEnd><ReturnArrow /></FootRuleEnd>
          </FootRule>
          <FootNote>
            <NoteTick />极光下载<ReturnArrow />
          </FootNote>
          <CropRow>
            <CropMark $left $top />
            <CropMark $top />
          </CropRow>
        </Page>
        <Page $h={500} $pad="71px 0 0 95px">
          <CropRow>
            <CropMark $left />
            <CropMark />
          </CropRow>
          <HeadingRow>
            <Bullet />
            <HeadingText>
              二、历史<HeadingNum>2</HeadingNum>
              <ReturnMark><ReturnArrow w={17} h={14} c="#777" /></ReturnMark>
            </HeadingText>
          </HeadingRow>
          <Body>
            {bodyLines.map((l, i) => <Line key={l} $indent={i === 0 ? 28 : 0}>{l}</Line>)}
            <Line $last>历史学研究是大学研究的一门主要学科。<ReturnMark $ml={4}><ReturnArrow w={13} h={11} c="#999" /></ReturnMark></Line>
            <Line $last><ReturnMark><ReturnArrow w={13} h={11} c="#999" /></ReturnMark></Line>
          </Body>
        </Page>
      </Workspace>

      <ArrowLayer width="190" height="135" viewBox="640 366 190 135">
        <defs>
          <filter id="arrowShadow" x="-20%" y="-20%" width="140%" height="140%">
            <feDropShadow dx="1" dy="2" stdDeviation="1.500" floodColor="#000" floodOpacity=".6" />
          </filter>
        </defs>
        <g filter="url(#arrowShadow)">
          <path d="M814 376 670 474" stroke="#f00" strokeWidth="3" strokeLinecap="round" />
          <path d="M654 487 672 468 670 474 678 479z" fill="#f00" />
        </g>
      </ArrowLayer>

      <Watermark>
        <TagBadge><TagWord>TAG</TagWord></TagBadge>
        <WatermarkText>
          <SiteName>电脑技术网</SiteName>
          <SiteUrl>www.tagxp.com</SiteUrl>
        </WatermarkText>
      </Watermark>
    </Screen>
  );
}
